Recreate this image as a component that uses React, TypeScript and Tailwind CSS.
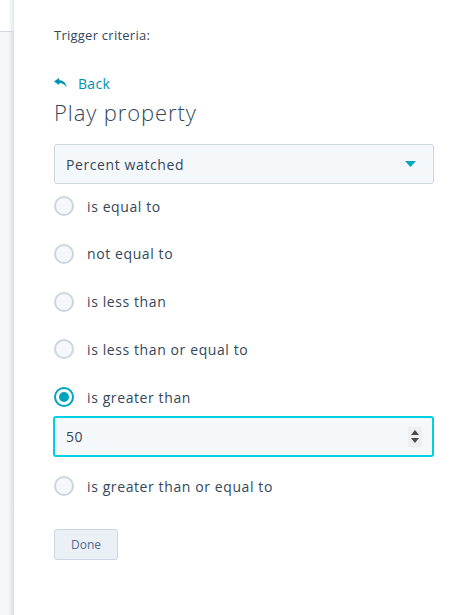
import React from "react";

const options = [
  "is equal to",
  "not equal to",
  "is less than",
  "is less than or equal to",
  "is greater than",
];

function Radio({ checked }: { checked?: boolean }) {
  if (checked) {
    return (
      <span className="flex h-5 w-5 shrink-0 items-center justify-center rounded-full border-2 border-[#00a4bd] bg-white">
        <span className="h-[10px] w-[10px] rounded-full bg-[#00a4bd]" />
      </span>
    );
  }
  return <span className="h-5 w-5 shrink-0 rounded-full border-2 border-[#cbd6e2] bg-[#f5f8fa]" />;
}

function RadioRow({ label, checked }: { label: string; checked?: boolean }) {
  return (
    <label className="flex h-6 items-center gap-[13px] text-[14px] tracking-[0.6px] text-[#33475b]">
      <Radio checked={checked} />
      <span>{label}</span>
    </label>
  );
}

export default function App() {
  return (
    <div className="flex h-[615px] w-[468px] bg-white font-['Open_Sans','Lato',sans-serif] text-[#33475b]">
      {/* page behind the panel */}
      <div className="flex w-[14px] shrink-0 flex-col">
        <div className="h-[32px] border-b border-[#cbd6e2] bg-white bg-gradient-to-r from-white from-60% to-[#e1e7ee]" />
        <div className="flex-1 bg-gradient-to-r from-[#f5f8fa] from-60% to-[#d6dee7]" />
      </div>

      <div className="flex-1 pl-[40px] pr-[34px] pt-[25px]">
        <p className="text-[13px] leading-5 tracking-[0.25px]">Trigger criteria:</p>

        <button className="mt-[28px] flex h-5 items-center gap-[11px] text-[14px] tracking-[0.3px] text-[#0091ae]">
          <svg width="13" height="10" viewBox="0 0 13 10" fill="#0091ae">
            <path d="M0 3.5 L5 0 L5 2.2 C9 2.2 12 4.5 12.8 9.5 C11 6.6 8.8 5 5 5 L5 7 Z" />
          </svg>
          Back
        </button>

        <h2 className="mt-1 text-[22px] font-light leading-[30px] tracking-[0.9px] text-[#33475b]">Play property</h2>

        <div className="mt-[17px] flex h-[40px] items-center justify-between rounded-[3px] border border-[#cbd6e2] bg-[#f5f8fa] pl-[11px] pr-[17px] text-[14px] tracking-[0.6px]">
          <span>Percent watched</span>
          <svg width="11" height="6" viewBox="0 0 11 6" fill="#00a4bd">
            <path d="M0 0 H11 L5.5 6 Z" />
          </svg>
        </div>

        <div className="mt-[10px] flex flex-col gap-[23.75px]">
          {options.map((o) => (
            <RadioRow key={o} label={o} checked={o === "is greater than"} />
          ))}
        </div>

        <div className="-ml-px mt-[7px] flex h-[41px] items-center justify-between rounded-[3px] border-2 border-[#00d0e4] bg-[#f5f8fa] pl-[11px] pr-[10px] text-[14px] tracking-[0.6px]">
          <span>50</span>
          <span className="flex h-[20px] w-[14px] flex-col items-center justify-center gap-[3px] bg-[#eceff2]">
            <svg width="8" height="5" viewBox="0 0 8 5" fill="#4a4a4a">
              <path d="M4 0 L8 5 H0 Z" />
            </svg>
            <svg width="8" height="5" viewBox="0 0 8 5" fill="#4a4a4a">
              <path d="M0 0 H8 L4 5 Z" />
            </svg>
          </span>
        </div>

        <div className="mt-[17px]">
          <RadioRow label="is greater than or equal to" />
        </div>

        <button className="mt-[31px] h-[31px] w-[64px] rounded-[3px] border border-[#cbd6e2] bg-[#eaf0f6] text-[12px] text-[#506e91]">
          Done
        </button>
      </div>
    </div>
  );
}
